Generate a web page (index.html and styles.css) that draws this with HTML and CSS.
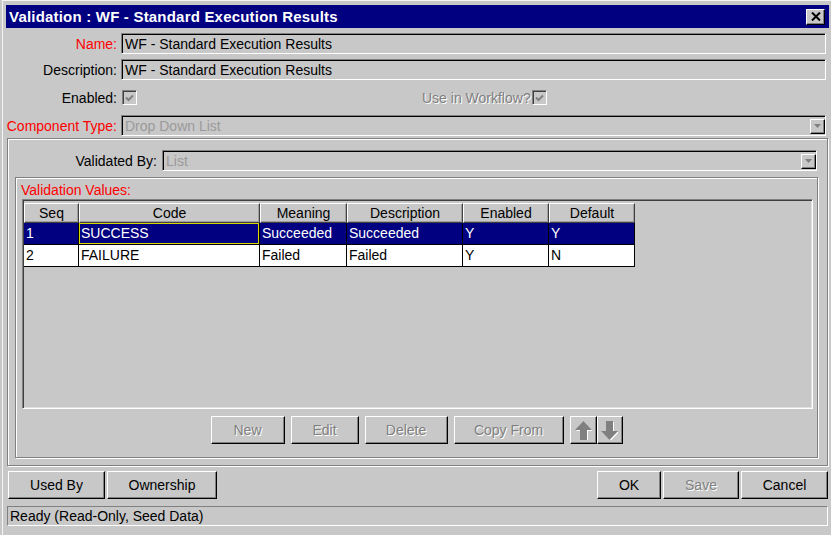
FILE: index.html
```html
<!DOCTYPE html>
<html>
<head>
<meta charset="utf-8">
<title>Validation : WF - Standard Execution Results</title>
<link rel="stylesheet" href="styles.css">
</head>
<body>
<div class="window">
  <div class="titlebar">
    <span class="title">Validation : WF - Standard Execution Results</span>
    <span class="close">
      <svg width="10" height="9" viewBox="0 0 10 9"><path d="M1 0.5 L9 8.5 M9 0.5 L1 8.5" stroke="#000" stroke-width="2" fill="none"/></svg>
    </span>
  </div>

  <div class="row r-name">
    <span class="label req">Name:</span>
    <div class="field">WF - Standard Execution Results</div>
  </div>
  <div class="row r-desc">
    <span class="label">Description:</span>
    <div class="field">WF - Standard Execution Results</div>
  </div>
  <div class="row r-enabled">
    <span class="label">Enabled:</span>
    <span class="check"><svg width="9" height="8" viewBox="0 0 9 8"><path d="M1 3.5 L3.5 6 L8 1.5" stroke="#808080" stroke-width="2" fill="none"/></svg></span>
    <span class="wf">
      <span class="disabled">Use in Workflow?</span>
      <span class="check"><svg width="9" height="8" viewBox="0 0 9 8"><path d="M1 3.5 L3.5 6 L8 1.5" stroke="#808080" stroke-width="2" fill="none"/></svg></span>
    </span>
  </div>
  <div class="row r-type">
    <span class="label req">Component Type:</span>
    <div class="field combo">
      <span class="muted">Drop Down List</span>
      <span class="drop"><svg width="7" height="4" viewBox="0 0 7 4"><path d="M0 0H7L3.5 4Z" fill="#808080"/></svg></span>
    </div>
  </div>

  <div class="panel">
    <div class="row r-valby">
      <span class="label wide">Validated By:</span>
      <div class="field combo">
        <span class="muted">List</span>
        <span class="drop"><svg width="7" height="4" viewBox="0 0 7 4"><path d="M0 0H7L3.5 4Z" fill="#808080"/></svg></span>
      </div>
    </div>

    <div class="group">
      <div class="group-title req">Validation Values:</div>
      <div class="grid">
        <div class="table">
          <div class="th">Seq</div>
          <div class="th">Code</div>
          <div class="th">Meaning</div>
          <div class="th">Description</div>
          <div class="th">Enabled</div>
          <div class="th">Default</div>

          <div class="td sel">1</div>
          <div class="td sel focus">SUCCESS</div>
          <div class="td sel">Succeeded</div>
          <div class="td sel">Succeeded</div>
          <div class="td sel">Y</div>
          <div class="td sel">Y</div>

          <div class="td">2</div>
          <div class="td">FAILURE</div>
          <div class="td">Failed</div>
          <div class="td">Failed</div>
          <div class="td">Y</div>
          <div class="td">N</div>
        </div>
      </div>

      <div class="actions">
        <span class="btn w-new"><span class="disabled">New</span></span>
        <span class="btn w-edit"><span class="disabled">Edit</span></span>
        <span class="btn w-delete"><span class="disabled">Delete</span></span>
        <span class="btn w-copy"><span class="disabled">Copy From</span></span>
        <span class="updown">
          <span class="btn w-up"><svg width="17" height="19" viewBox="0 0 17 19"><path d="M9.5 1 L18 10 H13 V20 H6 V10 H1 Z" fill="#fff"/><path d="M8.5 0 L17 9 H12 V19 H5 V9 H0 Z" fill="#808080"/></svg></span>
          <span class="btn w-down"><svg width="17" height="19" viewBox="0 0 17 19"><path d="M9.5 20 L18 11 H13 V1 H6 V11 H1 Z" fill="#fff"/><path d="M8.5 19 L17 10 H12 V0 H5 V10 H0 Z" fill="#808080"/></svg></span>
        </span>
      </div>
    </div>
  </div>

  <div class="bottom">
    <div class="btn-set">
      <span class="btn w-usedby">Used By</span>
      <span class="btn w-owner">Ownership</span>
    </div>
    <div class="btn-set">
      <span class="btn w-ok">OK</span>
      <span class="btn w-save"><span class="disabled">Save</span></span>
      <span class="btn w-cancel">Cancel</span>
    </div>
  </div>

  <div class="status">Ready (Read-Only, Seed Data)</div>
</div>
</body>
</html>
```

FILE: styles.css
```css
* {
  box-sizing: border-box;
}

html,
body {
  margin: 0;
}

body {
  width: 831px;
  height: 535px;
  overflow: hidden;
  background: #c8c8c8;
  font-family: "Liberation Sans", Arial, sans-serif;
  font-size: 14px;
  color: #000;
}

/* dialog frame */
.window {
  width: 831px;
  height: 535px;
  padding: 5px 2px 0 6px;
  background: #c8c8c8;
  box-shadow: inset 2px 0 0 #c8c8c8, inset 3px 1px 0 #f4f4f4;
}

.titlebar {
  height: 23px;
  background: #000080;
  color: #fff;
  font-weight: bold;
  display: flex;
  align-items: center;
  justify-content: space-between;
  padding: 0 4px 0 3px;
}

.title {
  font-size: 15px;
  letter-spacing: 0.2px;
  line-height: 23px;
}

.close {
  width: 19px;
  height: 16px;
  background: #c8c8c8;
  border: 1px solid;
  border-color: #fff #000 #000 #fff;
  box-shadow: inset -1px -1px 0 #808080;
  display: flex;
  align-items: center;
  justify-content: center;
}

/* form rows */
.row {
  display: flex;
  align-items: center;
  height: 21px;
  margin-right: 3px;
}

.r-name { margin-top: 5px; }
.r-desc { margin-top: 5px; }
.r-enabled { margin-top: 7px; }
.r-type { margin-top: 7px; }

.label {
  width: 112px;
  flex: none;
  text-align: right;
  padding-right: 1px;
  margin-right: 3px;
  white-space: nowrap;
}

.label.wide {
  width: 150px;
  margin-right: 4px;
}

.req {
  color: #ff0000;
}

.field {
  flex: 1;
  height: 21px;
  padding: 0 0 0 3px;
  border: 1px solid;
  border-color: #808080 #fff #fff #808080;
  box-shadow: inset 1px 1px 0 #000;
  display: flex;
  align-items: center;
  white-space: nowrap;
}

.field.combo {
  justify-content: space-between;
  padding-right: 0;
}

.muted {
  color: #9a9a9a;
}

.disabled {
  color: #808080;
  text-shadow: 1px 1px 0 #fff;
}

.drop {
  width: 15px;
  height: 15px;
  margin-top: 1px;
  background: #c8c8c8;
  border: 1px solid;
  border-color: #fff #000 #000 #fff;
  box-shadow: inset -1px -1px 0 #808080;
  display: flex;
  align-items: center;
  justify-content: center;
}

.check {
  width: 15px;
  height: 15px;
  flex: none;
  margin-left: 1px;
  border: 1px solid;
  border-color: #808080 #fff #fff #808080;
  box-shadow: inset 1px 1px 0 #404040;
  display: flex;
  align-items: center;
  justify-content: center;
}

.wf {
  display: flex;
  align-items: center;
  margin-left: 285px;
}

/* etched panels */
.panel {
  margin: 2px 1px 0 1px;
  height: 328px;
  border: 1px solid #808080;
  box-shadow: inset 1px 1px 0 #fff, 1px 1px 0 #fff;
  padding-top: 11px;
}

.r-valby {
  margin-right: 10px;
}

.group {
  margin: 6px 9px 0 7px;
  height: 281px;
  border: 1px solid #808080;
  box-shadow: inset 1px 1px 0 #fff, 1px 1px 0 #fff;
  padding-top: 4px;
}

.group-title {
  line-height: 16px;
  padding-left: 5px;
}

/* values grid */
.grid {
  margin: 1px 4px 0 6px;
  height: 210px;
  border: 1px solid;
  border-color: #808080 #fff #fff #808080;
  box-shadow: inset 1px 1px 0 #404040, inset -1px -1px 0 #dfdfdf;
  padding: 3px 0 0 1px;
}

.table {
  display: grid;
  grid-template-columns: 55px 181px 87px 116px 86px 86px;
  width: 611px;
}

.th {
  height: 20px;
  line-height: 18px;
  text-align: center;
  border: 1px solid;
  border-color: #fff #404040 #404040 #fff;
  box-shadow: inset -1px -1px 0 #a0a0a0;
  white-space: nowrap;
}

.td {
  height: 22px;
  line-height: 21px;
  padding-left: 2px;
  background: #fff;
  border-right: 1px solid #000;
  border-bottom: 1px solid #000;
  white-space: nowrap;
}

.td.sel {
  background: #000080;
  color: #fff;
}

.td.focus {
  box-shadow: inset 0 0 0 1px #d8d800;
}

/* buttons */
.actions {
  display: flex;
  justify-content: center;
  gap: 6px;
  margin-top: 7px;
  height: 28px;
}

.updown {
  display: flex;
}

.btn {
  height: 28px;
  flex: none;
  display: flex;
  align-items: center;
  justify-content: center;
  background: #c8c8c8;
  border: 1px solid;
  border-color: #fff #000 #000 #fff;
  box-shadow: inset -1px -1px 0 #808080;
  white-space: nowrap;
}

.w-new { width: 74px; }
.w-edit { width: 68px; }
.w-delete { width: 83px; }
.w-copy { width: 110px; }
.w-up { width: 27px; }
.w-down { width: 26px; }

.bottom {
  display: flex;
  justify-content: space-between;
  margin: 5px 1px 0 2px;
  height: 28px;
}

.btn-set {
  display: flex;
  gap: 2px;
}

.w-usedby { width: 97px; }
.w-owner { width: 110px; }
.w-ok { width: 64px; }
.w-save { width: 76px; }
.w-cancel { width: 87px; }

.status {
  margin: 7px 1px 0 1px;
  height: 20px;
  line-height: 18px;
  padding-left: 2px;
  border: 1px solid;
  border-color: #808080 #fff #fff #808080;
}
```
